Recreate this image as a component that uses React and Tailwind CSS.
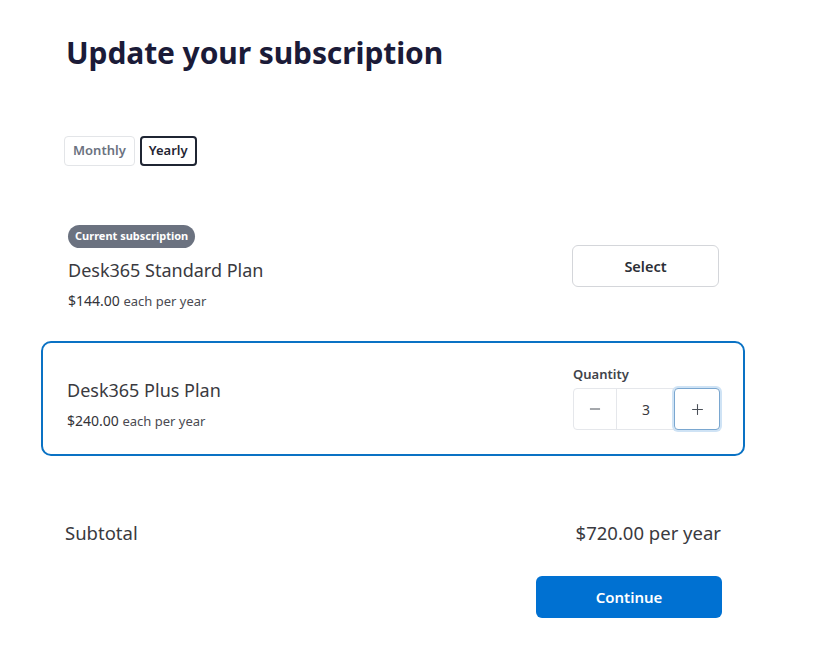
import { useState } from 'react';
import { Minus, Plus } from 'lucide-react';

const PLANS = [
  { id: 'standard', name: 'Desk365 Standard Plan', price: 144, current: true },
  { id: 'plus', name: 'Desk365 Plus Plan', price: 240, current: false },
];

function Price({ value }) {
  return (
    <p className="mt-[9px] text-[14px] leading-5 text-[#333338]">
      ${value.toFixed(2)} <span className="text-[13px] text-[#4a4a52]">each per year</span>
    </p>
  );
}

export default function App() {
  const [period, setPeriod] = useState('yearly');
  const [selected] = useState('plus');
  const [qty, setQty] = useState(3);

  const plan = PLANS.find((p) => p.id === selected);
  const subtotal = plan.price * qty;

  return (
    <div
      className="min-h-screen bg-white"
      style={{ fontFamily: '"Noto Sans", "Open Sans", Arial, sans-serif' }}
    >
      <div className="ml-[41px] w-[704px] pt-[33px]">
        <h1 className="px-[25px] text-[30px] font-bold leading-10 tracking-[-0.1px] text-[#1b1b38]">
          Update your subscription
        </h1>

        {/* billing period toggle */}
        <div className="mt-[63px] flex gap-[5px] px-[23px]">
          <button
            type="button"
            onClick={() => setPeriod('monthly')}
            className={
              period === 'monthly'
                ? 'h-[30px] rounded-[4px] border-2 border-[#1f2533] px-[8px] text-[13px] font-semibold text-[#1f2533]'
                : 'h-[30px] rounded-[4px] border border-[#e3e5e8] px-[8px] text-[13px] font-semibold text-[#6b7280]'
            }
          >
            Monthly
          </button>
          <button
            type="button"
            onClick={() => setPeriod('yearly')}
            className={
              period === 'yearly'
                ? 'h-[30px] rounded-[4px] border-2 border-[#1f2533] px-[7px] text-[13px] font-semibold text-[#1f2533]'
                : 'h-[30px] rounded-[4px] border border-[#e3e5e8] px-[7px] text-[13px] font-semibold text-[#6b7280]'
            }
          >
            Yearly
          </button>
        </div>

        {/* current plan */}
        <div className="mt-[56px] flex items-center justify-between pl-[27px] pr-[26px]">
          <div>
            <span className="inline-flex h-[23px] items-center rounded-full bg-[#6b7280] px-[7px] text-[11px] font-bold text-white">
              Current subscription
            </span>
            <h2 className="mt-[10px] text-[18px] leading-6 text-[#3a3a40]">{PLANS[0].name}</h2>
            <Price value={PLANS[0].price} />
          </div>
          <button
            type="button"
            className="h-[42px] w-[147px] rounded-[6px] border border-[#d4d6da] text-[14.5px] font-semibold text-[#2c2f36]"
          >
            Select
          </button>
        </div>

        {/* selected plan */}
        <div className="mt-[30px] flex h-[115px] items-center justify-between rounded-[10px] border-2 border-[#0a72c4] pl-[24px] pr-[23px]">
          <div className="pt-[12px]">
            <h2 className="text-[18px] leading-6 text-[#3a3a40]">{PLANS[1].name}</h2>
            <Price value={PLANS[1].price} />
          </div>
          <div>
            <p className="text-[13px] font-semibold leading-4 text-[#3f434a]">Quantity</p>
            <div className="mt-[6px] flex h-[42px] w-[147px] rounded-[4px] border border-[#e5e7eb]">
              <button
                type="button"
                onClick={() => setQty((q) => Math.max(1, q - 1))}
                className="flex w-[43px] items-center justify-center border-r border-[#e5e7eb] text-[#4b5058]"
              >
                <Minus size={16} strokeWidth={1.5} />
              </button>
              <div className="flex flex-1 items-center justify-center text-[14px] text-[#3a3a40]">{qty}</div>
              <button
                type="button"
                onClick={() => setQty((q) => q + 1)}
                className="-m-px flex w-[46px] items-center justify-center rounded-[4px] border border-[#7aa7d0] text-[#4b5058] shadow-[0_0_0_2px_#cfe3f5]"
              >
                <Plus size={17} strokeWidth={1.5} />
              </button>
            </div>
          </div>
        </div>

        {/* subtotal */}
        <div className="mt-[65px] flex items-center justify-between pl-[24px] pr-[24px] text-[18.5px] leading-6 text-[#3a3a40]">
          <span>Subtotal</span>
          <span>${subtotal.toFixed(2)} per year</span>
        </div>

        <div className="mt-[31px] flex justify-end pr-[23px]">
          <button
            type="button"
            className="h-[42px] w-[186px] rounded-[6px] bg-[#0071d2] text-[15px] font-semibold text-white"
          >
            Continue
          </button>
        </div>
      </div>
    </div>
  );
}
